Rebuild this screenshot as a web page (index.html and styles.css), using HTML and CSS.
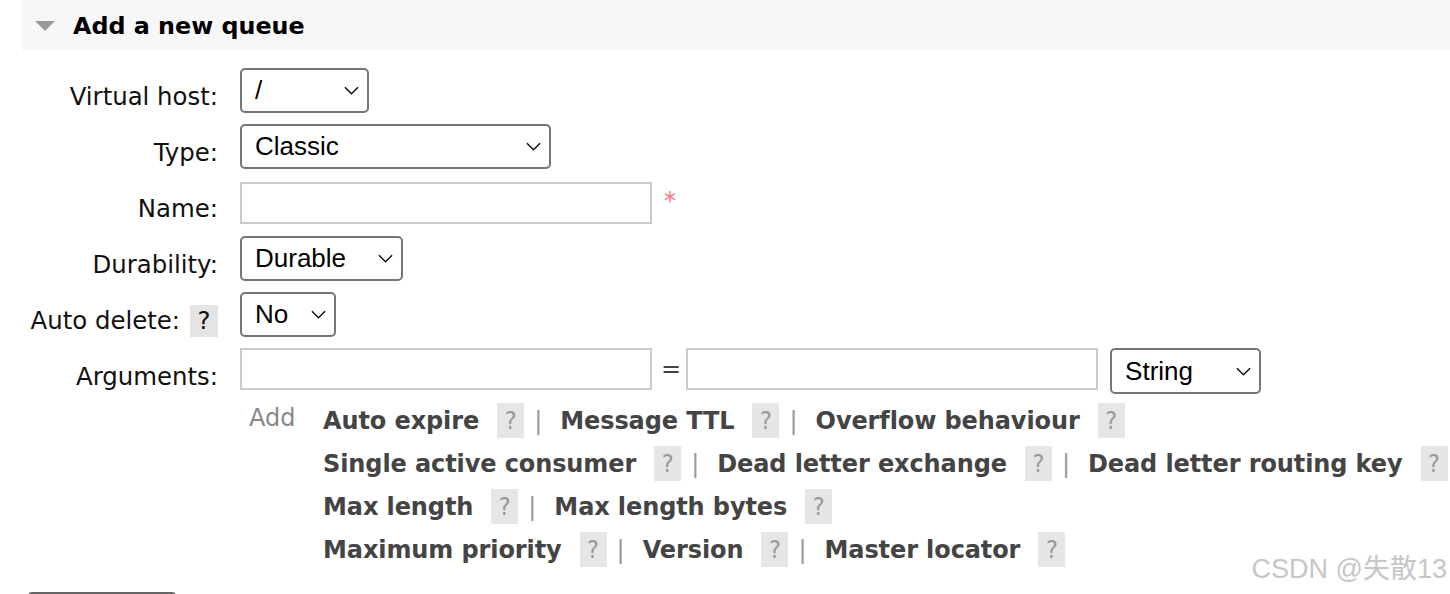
FILE: index.html
```html
<!DOCTYPE html>
<html lang="en">
<head>
<meta charset="utf-8">
<title>Add a new queue</title>
<link rel="stylesheet" href="styles.css">
</head>
<body>
<div class="section">
  <h2 class="section-head"><span class="tri"></span>Add a new queue</h2>
  <div class="form">
    <div class="label">Virtual host:</div>
    <div class="field">
      <div class="select w-vhost"><span>/</span><svg class="chev" viewBox="0 0 16 9"><path d="M1 1 L8 8 L15 1"/></svg></div>
    </div>

    <div class="label">Type:</div>
    <div class="field">
      <div class="select w-type"><span>Classic</span><svg class="chev" viewBox="0 0 16 9"><path d="M1 1 L8 8 L15 1"/></svg></div>
    </div>

    <div class="label">Name:</div>
    <div class="field">
      <input class="input" type="text"><span class="req">*</span>
    </div>

    <div class="label">Durability:</div>
    <div class="field">
      <div class="select w-dur"><span>Durable</span><svg class="chev" viewBox="0 0 16 9"><path d="M1 1 L8 8 L15 1"/></svg></div>
    </div>

    <div class="label label-help"><span>Auto delete:</span><span class="help-dark">?</span></div>
    <div class="field">
      <div class="select w-auto"><span>No</span><svg class="chev" viewBox="0 0 16 9"><path d="M1 1 L8 8 L15 1"/></svg></div>
    </div>

    <div class="label">Arguments:</div>
    <div class="field field-top">
      <input class="input" type="text"><span class="eq">=</span><input class="input" type="text">
      <div class="select w-str"><span>String</span><svg class="chev" viewBox="0 0 16 9"><path d="M1 1 L8 8 L15 1"/></svg></div>
    </div>

    <div class="arg-links">
      <span class="add">Add</span>
      <div class="links">
        <div class="link-row">
          <span class="arg">Auto expire</span><span class="help">?</span><span class="sep">|</span>
          <span class="arg">Message TTL</span><span class="help">?</span><span class="sep">|</span>
          <span class="arg">Overflow behaviour</span><span class="help">?</span>
        </div>
        <div class="link-row">
          <span class="arg">Single active consumer</span><span class="help">?</span><span class="sep">|</span>
          <span class="arg">Dead letter exchange</span><span class="help">?</span><span class="sep">|</span>
          <span class="arg">Dead letter routing key</span><span class="help">?</span>
        </div>
        <div class="link-row">
          <span class="arg">Max length</span><span class="help">?</span><span class="sep">|</span>
          <span class="arg">Max length bytes</span><span class="help">?</span>
        </div>
        <div class="link-row">
          <span class="arg">Maximum priority</span><span class="help">?</span><span class="sep">|</span>
          <span class="arg">Version</span><span class="help">?</span><span class="sep">|</span>
          <span class="arg">Master locator</span><span class="help">?</span>
        </div>
      </div>
    </div>
  </div>
  <button class="submit" type="button" aria-label="Add queue"></button>
</div>
<div class="watermark">CSDN @失散13</div>
</body>
</html>
```

FILE: styles.css
```css
html, body {
  margin: 0;
  padding: 0;
}

body {
  width: 1450px;
  height: 594px;
  overflow: hidden;
  position: relative;
  background: #fff;
  color: #111;
  font-family: "DejaVu Sans", Verdana, sans-serif;
  font-size: 24px;
}

.section-head {
  margin: 0 0 0 22px;
  height: 50px;
  box-sizing: border-box;
  padding: 2px 0 0 13px;
  display: flex;
  align-items: center;
  gap: 18px;
  background: #f7f7f7;
  color: #000;
  font-size: 23.8px;
  font-weight: bold;
}

.tri {
  width: 0;
  height: 0;
  border-left: 10px solid transparent;
  border-right: 10px solid transparent;
  border-top: 10px solid #9a9a9a;
}

.form {
  display: grid;
  grid-template-columns: 218px 1fr;
  column-gap: 22px;
  row-gap: 11px;
  margin-top: 18px;
}

.label {
  text-align: right;
  padding-top: 15px;
  line-height: 28px;
  font-size: 24.4px;
  white-space: nowrap;
}

.label-help {
  display: flex;
  justify-content: flex-end;
  align-items: flex-start;
  gap: 10px;
}

.help-dark {
  margin-top: -2px;
  width: 28px;
  height: 32px;
  line-height: 32px;
  text-align: center;
  background: #e4e4e4;
  color: #111;
}

.field {
  display: flex;
  align-items: center;
  min-height: 45px;
}

.field-top {
  align-items: flex-start;
}

.select {
  display: flex;
  align-items: center;
  justify-content: space-between;
  height: 45px;
  box-sizing: border-box;
  border: 2px solid #767676;
  border-radius: 5px;
  padding: 0 8px 0 13px;
  background: #fff;
  color: #000;
  font-family: "Liberation Sans", Arial, sans-serif;
  font-size: 26px;
}

.chev {
  width: 15px;
  height: 9px;
  fill: none;
  stroke: #111;
  stroke-width: 1.6;
}

.w-vhost { width: 129px; }
.w-type { width: 311px; }
.w-dur { width: 163px; }
.w-auto { width: 96px; }
.w-str { width: 151px; height: 46px; margin-left: 12px; }

.input {
  width: 412px;
  height: 42px;
  box-sizing: border-box;
  margin: 0;
  border: 2px solid #cbcbcb;
  background: #fff;
  font: inherit;
}

.req {
  margin-left: 12px;
  color: #f77;
  line-height: 28px;
  margin-top: -4px;
}

.eq {
  margin: 0 5px 0 9px;
  color: #444;
  line-height: 42px;
}

.arg-links {
  grid-column: 2;
  display: flex;
  align-items: flex-start;
  margin-top: -2px;
}

.add {
  color: #888;
  line-height: 28px;
  padding-left: 9px;
  width: 56px;
  margin-right: 18px;
  margin-top: 1px;
}

.links {
  display: flex;
  flex-direction: column;
  gap: 8px;
}

.link-row {
  display: flex;
  align-items: center;
  height: 35px;
  white-space: nowrap;
}

.arg {
  font-weight: bold;
  color: #444;
  letter-spacing: -0.1px;
}

.help {
  width: 27px;
  height: 35px;
  margin-left: 18px;
  display: flex;
  align-items: center;
  justify-content: center;
  background: #e6e6e6;
  color: #999;
  font-family: "Liberation Sans Narrow", "DejaVu Sans Condensed", sans-serif;
  font-weight: 300;
  font-size: 25px;
}

.sep {
  margin: 0 18px 0 10px;
  color: #999;
}

.submit {
  display: block;
  margin: 25px 0 0 28px;
  padding: 0;
  width: 148px;
  height: 40px;
  border: 2px solid #666;
  border-radius: 4px;
  background: #efefef;
}

.watermark {
  position: absolute;
  right: 3px;
  bottom: 9px;
  color: #c6c6c6;
  font-family: "Liberation Sans", "Noto Sans CJK SC", sans-serif;
  font-size: 27px;
  line-height: 32px;
}
```
